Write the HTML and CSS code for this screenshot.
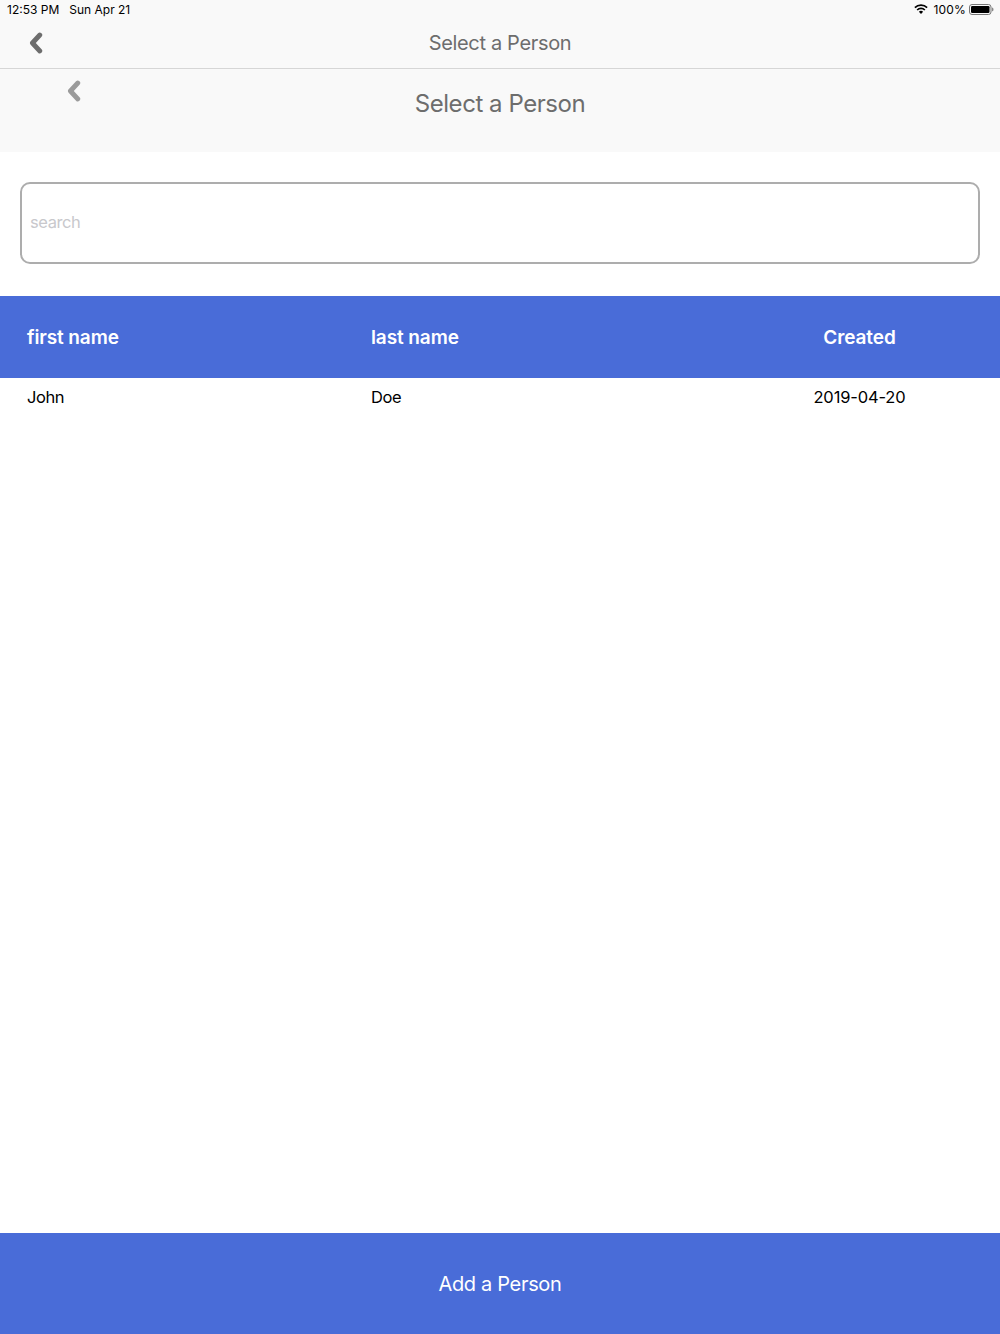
FILE: index.html
```html
<!DOCTYPE html>
<html lang="en">
<head>
<meta charset="utf-8">
<title>Select a Person</title>
<link rel="stylesheet" href="styles.css">
</head>
<body>
<div class="app">
  <header class="topbar">
    <div class="status">
      <div class="status-left"><span>12:53 PM</span><span>Sun Apr 21</span></div>
      <div class="status-right">
        <svg class="wifi" viewBox="0 0 16 12" width="14" height="10.5"><path d="M8 11.5 5.6 8.8a3.4 3.4 0 0 1 4.8 0z" fill="#000"/><path d="M3.6 6.9a6.2 6.2 0 0 1 8.8 0" fill="none" stroke="#000" stroke-width="1.9"/><path d="M1 4.2a9.9 9.9 0 0 1 14 0" fill="none" stroke="#000" stroke-width="1.9"/></svg>
        <span class="pct">100%</span>
        <svg class="battery" viewBox="0 0 25 11" width="25" height="11"><rect x=".5" y=".5" width="21.5" height="10" rx="2.5" fill="none" stroke="#777"/><rect x="2" y="2" width="18.5" height="7" rx="1.2" fill="#000"/><path d="M23 3.6c1 .3 1.5 1 1.5 1.9s-.5 1.6-1.5 1.9z" fill="#888"/></svg>
      </div>
    </div>
    <div class="nav">
      <svg class="chevron chevron-dark" viewBox="0 0 14 22" width="14" height="22"><path d="M10.8 3 3.4 11l7.4 8" fill="none" stroke="#6d6d6d" stroke-width="4.8" stroke-linecap="round" stroke-linejoin="round"/></svg>
      <span class="nav-title">Select a Person</span>
    </div>
  </header>
  <section class="subheader">
    <svg class="chevron chevron-light" viewBox="0 0 14 22" width="14" height="22"><path d="M10.8 3 3.4 11l7.4 8" fill="none" stroke="#9b9b9b" stroke-width="4.8" stroke-linecap="round" stroke-linejoin="round"/></svg>
    <h1 class="sub-title">Select a Person</h1>
  </section>
  <div class="search-wrap">
    <div class="search"><span class="placeholder">search</span></div>
  </div>
  <main class="table">
    <div class="row head">
      <div class="c1">first name</div>
      <div class="c2">last name</div>
      <div class="c3">Created</div>
    </div>
    <div class="row body-row">
      <div class="c1">John</div>
      <div class="c2">Doe</div>
      <div class="c3">2019-04-20</div>
    </div>
  </main>
  <footer class="add">Add a Person</footer>
</div>
</body>
</html>
```
FILE: styles.css
```css
* { box-sizing: border-box; }
html, body { margin: 0; height: 100%; background: #fff; }
body { font-family: Inter, "Liberation Sans", sans-serif; color: #000; }
.app { height: 1334px; display: flex; flex-direction: column; overflow: hidden; }

.topbar { height: 69px; background: #f9f9f9; border-bottom: 1px solid #d6d6d6; display: flex; flex-direction: column; flex: none; }
.status { height: 19px; padding: 0 6px 0 7px; display: flex; justify-content: space-between; align-items: center; font-size: 12px; flex: none; }
.status-left { display: flex; gap: 10px; }
.status-right { display: flex; align-items: center; }
.wifi { margin-right: 5px; }
.pct { margin-right: 3px; letter-spacing: .2px; }
.battery { margin-right: 0; }

.nav { flex: 1; display: flex; align-items: center; justify-content: center; position: relative; padding-bottom: 1px; }
.nav-title { font-size: 20px; letter-spacing: -.33px; color: #6d6d6d; }
.chevron { display: block; }
.chevron-dark { position: absolute; left: 29px; top: 13px; }

.subheader { height: 83px; background: #f9f9f9; flex: none; position: relative; display: flex; justify-content: center; padding-top: 19px; }
.chevron-light { position: absolute; left: 67px; top: 11px; }
.sub-title { margin: 0; font-size: 24px; line-height: 32px; font-weight: 400; letter-spacing: -.45px; color: #6d6d6d; }

.search-wrap { padding: 30px 20px 32px; flex: none; }
.search { height: 82px; border: 2px solid #adadad; border-radius: 10px; display: flex; align-items: center; padding-left: 8px; padding-bottom: 2px; }
.placeholder { font-size: 16.5px; letter-spacing: -.4px; color: #c8c8cc; }

.table { flex: 1; }
.row { display: grid; grid-template-columns: 344px 1fr 281px; padding-left: 27px; }
.c3 { text-align: center; }
.head { height: 82px; background: #496cd8; color: #fff; font-size: 19px; font-weight: 600; letter-spacing: -.1px; align-items: center; }
.body-row { font-size: 16.5px; padding-top: 9px; line-height: 21px; }
.body-row .c1, .body-row .c2 { letter-spacing: -.45px; }
.body-row .c3 { letter-spacing: -.15px; }

.add { height: 101px; flex: none; background: #496cd8; color: #fff; font-size: 20px; letter-spacing: -.33px; display: flex; align-items: center; justify-content: center; }
```
